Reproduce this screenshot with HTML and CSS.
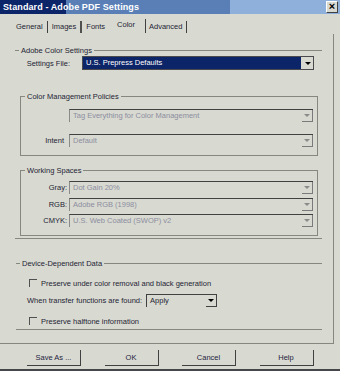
FILE: index.html
```html
<!DOCTYPE html>
<html lang="en">
<head>
    <meta charset="UTF-8">
    <title>Standard - Adobe PDF Settings</title>
    <link rel="stylesheet" href="styles.css">
</head>
<body>
    <div class="window">
        <div class="titlebar">
            <span class="title">Standard - Adobe PDF Settings</span>
            <span class="close">&#215;</span>
        </div>

        <div class="tabs">
            <span class="tab">General</span>
            <span class="tab tab-thick">Images</span>
            <span class="tab tab-plain">Fonts</span>
            <span class="tab tab-active">Color</span>
            <span class="tab tab-last">Advanced</span>
        </div>

        <div class="panel">
            <fieldset class="group group-open adobe">
                <legend>Adobe Color Settings</legend>
                <div class="row row-main">
                    <span class="lbl">Settings File:</span>
                    <div class="combo combo-hl">
                        <span class="combo-text">U.S. Prepress Defaults</span>
                        <span class="combo-btn"><i class="arrow"></i></span>
                    </div>
                </div>

                <fieldset class="group group-box policies">
                    <legend>Color Management Policies</legend>
                    <div class="rows">
                        <div class="row row-sub">
                            <span class="lbl"></span>
                            <div class="combo combo-off">
                                <span class="combo-text">Tag Everything for Color Management</span>
                                <span class="combo-btn"><i class="arrow"></i></span>
                            </div>
                        </div>
                        <div class="row row-sub">
                            <span class="lbl lbl-intent">Intent</span>
                            <div class="combo combo-off">
                                <span class="combo-text">Default</span>
                                <span class="combo-btn"><i class="arrow"></i></span>
                            </div>
                        </div>
                    </div>
                </fieldset>

                <fieldset class="group group-box spaces">
                    <legend>Working Spaces</legend>
                    <div class="rows rows-tight">
                        <div class="row row-sub">
                            <span class="lbl">Gray:</span>
                            <div class="combo combo-off">
                                <span class="combo-text">Dot Gain 20%</span>
                                <span class="combo-btn"><i class="arrow"></i></span>
                            </div>
                        </div>
                        <div class="row row-sub">
                            <span class="lbl">RGB:</span>
                            <div class="combo combo-off">
                                <span class="combo-text">Adobe RGB (1998)</span>
                                <span class="combo-btn"><i class="arrow"></i></span>
                            </div>
                        </div>
                        <div class="row row-sub">
                            <span class="lbl">CMYK:</span>
                            <div class="combo combo-off">
                                <span class="combo-text">U.S. Web Coated (SWOP) v2</span>
                                <span class="combo-btn"><i class="arrow"></i></span>
                            </div>
                        </div>
                    </div>
                </fieldset>
            </fieldset>

            <fieldset class="group group-open device">
                <legend>Device-Dependent Data</legend>
                <label class="check"><span class="box"></span>Preserve under color removal and black generation</label>
                <div class="transfer">
                    <span>When transfer functions are found:</span>
                    <div class="combo combo-apply">
                        <span class="combo-text">Apply</span>
                        <span class="combo-btn"><i class="arrow"></i></span>
                    </div>
                </div>
                <label class="check check-last"><span class="box"></span>Preserve halftone information</label>
            </fieldset>
        </div>

        <div class="buttons">
            <button>Save As ...</button>
            <button>OK</button>
            <button>Cancel</button>
            <button>Help</button>
        </div>
    </div>
</body>
</html>
```

FILE: styles.css
```css
* {
    box-sizing: border-box;
}
body {
    margin: 0;
    background: #d8d9d1;
}
.window {
    width: 340px;
    height: 371px;
    overflow: hidden;
    background: #d8d9d1;
    border-bottom: 2px solid #45464a;
    font-family: "Liberation Sans", Arial, sans-serif;
    font-size: 7.5px;
    color: #1e1e34;
}

/* title bar */
.titlebar {
    height: 14px;
    display: flex;
    align-items: center;
    justify-content: space-between;
    padding: 0 2px 0 3px;
    background: linear-gradient(to right, #0c2468 0, #0c2468 66px, #5a7fb6 66px, #5a7fb6 230px, #8fb0da 230px);
}
.title {
    color: #fff;
    font-weight: bold;
    font-size: 9px;
    letter-spacing: 0.1px;
}
.close {
    width: 12px;
    height: 12px;
    background: #d8d9d1;
    border: 1px solid;
    border-color: #fff #404040 #404040 #fff;
    color: #000;
    font-size: 11px;
    font-weight: bold;
    line-height: 9px;
    text-align: center;
}

/* tabs */
.tabs {
    height: 20px;
    display: flex;
    align-items: flex-end;
    padding: 0 0 1px 12px;
}
.tab {
    height: 12px;
    line-height: 12px;
    padding: 0 4px;
    border-right: 1px solid #404040;
}
.tab-thick {
    border-right: 2px solid #505050;
}
.tab-plain {
    border-right: none;
}
.tab-active {
    height: 14px;
    line-height: 11px;
    padding: 0 10px 0 8px;
}
.tab-last {
    padding: 0 4px 0 3px;
}

/* main panel */
.panel {
    width: 334px;
    height: 310px;
    padding: 12px 0 0 15px;
    border-right: 1px solid #868880;
    border-bottom: 1px solid #868880;
}
.group {
    margin: 0;
    padding: 0;
    border: 1px solid #868880;
    min-width: 0;
}
.group legend {
    height: 9px;
    line-height: 9px;
    padding: 0 2px;
    margin-left: 4px;
}
.group-open {
    border-left: none;
    border-right: none;
}
.adobe {
    width: 307px;
    padding-bottom: 2px;
}
.device {
    width: 306px;
    margin: 20px 0 0 1px;
    padding: 10px 0 3px 0;
}

/* rows */
.row {
    display: grid;
    align-items: center;
}
.row-main {
    grid-template-columns: 55px 232px;
    column-gap: 12px;
    margin-top: 1px;
    height: 14px;
}
.lbl {
    text-align: right;
}
.group-box {
    width: 298px;
    margin-left: 5px;
}
.policies {
    margin-top: 22px;
    padding: 8px 0 8px 0;
}
.spaces {
    margin-top: 10px;
    padding: 6px 0 8px 0;
}
.rows {
    display: flex;
    flex-direction: column;
    row-gap: 12px;
}
.rows-tight {
    row-gap: 3.5px;
}
.row-sub {
    grid-template-columns: 46px 244px;
    column-gap: 2px;
    height: 13px;
}
.lbl-intent {
    padding-right: 3px;
}

/* combo boxes */
.combo {
    display: flex;
    height: 13px;
}
.combo-text {
    flex: 1;
    padding-left: 3px;
    line-height: 12px;
    white-space: nowrap;
    overflow: hidden;
}
.combo-btn {
    width: 11px;
    display: flex;
    align-items: center;
    justify-content: center;
    border-right: 1px solid #404040;
    border-bottom: 1px solid #404040;
}
.arrow {
    width: 0;
    height: 0;
    border-left: 3px solid transparent;
    border-right: 3px solid transparent;
    border-top: 3px solid #000;
}
.combo-hl {
    height: 14px;
    border: 1px solid #4a4a4e;
}
.combo-hl .combo-text {
    background: #0c2468;
    color: #fff;
    margin-right: 1px;
}
.combo-hl .combo-btn {
    border: none;
}
.combo-off {
    border-top: 1px solid #404040;
    border-left: 1px solid #8a8a8a;
    color: #8c8ea0;
}
.combo-off .combo-btn {
    border-color: #7a7a7a;
}
.combo-off .arrow {
    border-top-color: #8a8a8a;
}

/* device dependent data */
.check {
    display: flex;
    align-items: center;
    height: 10px;
    padding-left: 13px;
}
.box {
    width: 8px;
    height: 8px;
    margin-right: 4px;
    border-top: 1px solid #505050;
    border-left: 1px solid #505050;
}
.transfer {
    display: flex;
    align-items: center;
    margin: 6px 0 9px 11px;
    column-gap: 4px;
}
.combo-apply {
    width: 71px;
    border-top: 1px solid #404040;
    border-left: 1px solid #404040;
}

/* buttons */
.buttons {
    display: flex;
    column-gap: 23.5px;
    padding-left: 27px;
    margin-top: 6px;
}
button {
    width: 54px;
    height: 16px;
    padding: 0;
    background: #d8d9d1;
    border: none;
    border-right: 1px solid #404040;
    border-bottom: 1px solid #404040;
    font-family: "Liberation Sans", Arial, sans-serif;
    font-size: 7.5px;
    color: #1e1e40;
}
```
